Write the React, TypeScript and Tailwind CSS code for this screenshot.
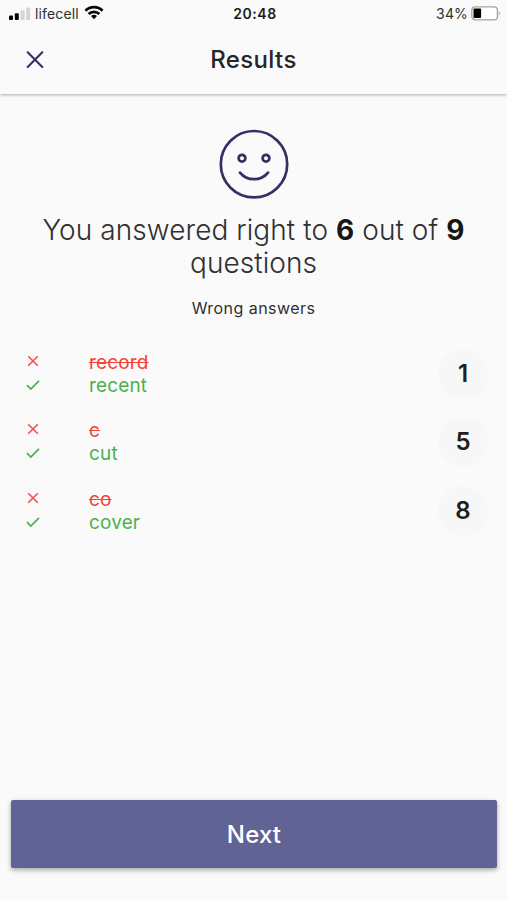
const answers = [
  {number: 1, wrong: 'record', right: 'recent'},
  {number: 5, wrong: 'c', right: 'cut'},
  {number: 8, wrong: 'co', right: 'cover'},
];

function StatusBar() {
  return (
    <div className="grid grid-cols-3 items-center h-[27px] pl-[9px] pr-[6px] text-[14px] leading-[17px] text-[#303030]">
      <div className="flex items-center">
        <svg width="22" height="14" viewBox="0 0 22 14" className="mr-[4px]">
          <rect x="0" y="8.4" width="4" height="4.5" rx="1" fill="#050505" />
          <rect x="5.8" y="6.2" width="4" height="6.7" rx="1" fill="#050505" />
          <rect x="11.6" y="3.2" width="4" height="9.7" rx="1" fill="#d4d4d4" />
          <rect x="17.2" y="0.4" width="4" height="12.5" rx="1" fill="#d4d4d4" />
        </svg>
        <span className="tracking-[0.15px]">lifecell</span>
        <svg width="20" height="15" viewBox="0 0 20 15" className="ml-[5px] mb-[2px]" fill="none" stroke="#080808" strokeWidth="2.7">
          <path d="M1.4 5.7 A12.3 12.3 0 0 1 18.6 5.7" />
          <path d="M4.6 9 A7.8 7.8 0 0 1 15.4 9" />
          <path d="M7 11.1 A4.4 4.4 0 0 1 13 11.1 L10 14.2 Z" fill="#080808" stroke="none" />
        </svg>
      </div>
      <div className="text-center font-semibold text-[#1c1c1c] tracking-[0.6px]">20:48</div>
      <div className="flex items-center justify-end">
        <span className="tracking-[0.15px]">34%</span>
        <svg width="30" height="15" viewBox="0 0 30 15" className="ml-[3px]">
          <rect x="0.8" y="0.8" width="25.6" height="13" rx="3.4" fill="#fff" stroke="#a3a3a3" strokeWidth="1.3" />
          <rect x="2.5" y="2.5" width="7.6" height="9.6" rx="1" fill="#000" />
          <path d="M27.8 5 Q30 7.3 27.8 9.6 Z" fill="#a3a3a3" />
        </svg>
      </div>
    </div>
  );
}

function Header() {
  return (
    <header className="bg-[#fafafa] h-[94px] shadow-[0_1px_3px_rgba(0,0,0,0.3)]">
      <StatusBar />
      <div className="grid grid-cols-[70px_1fr_70px] items-center h-[66px]">
        <svg width="18" height="18" viewBox="0 0 18 18" className="ml-[26px]" stroke="#352f63" strokeWidth="2.1" strokeLinecap="round">
          <path d="M1.7 1.3 L16.3 15.9 M16.3 1.3 L1.7 15.9" />
        </svg>
        <h1 className="text-center text-[24px] font-medium tracking-[0.35px] text-[#262626]">Results</h1>
      </div>
    </header>
  );
}

function Smiley() {
  return (
    <svg width="70" height="70" viewBox="0 0 70 70" fill="none" stroke="#352f63" strokeWidth="2.7" strokeLinecap="round">
      <circle cx="35" cy="35.2" r="33.2" />
      <circle cx="23" cy="29.2" r="3.4" />
      <circle cx="47" cy="29.2" r="3.4" />
      <path d="M21 43.6 C28 52.4 42 52.4 49 43.6" />
    </svg>
  );
}

function Marks() {
  return (
    <div className="w-[26px] h-[50px] flex flex-col items-center rounded-[13px] bg-[#f9f9f9]">
      <svg width="12" height="12" viewBox="0 0 12 12" className="mt-[6px]" stroke="#ef5350" strokeWidth="1.6">
        <path d="M1.2 1.2 L10.8 10.8 M10.8 1.2 L1.2 10.8" />
      </svg>
      <svg width="14" height="12" viewBox="0 0 14 12" className="mt-[12px]" fill="none" stroke="#4caf50" strokeWidth="1.7">
        <path d="M1 6.2 L4.8 10 L13 1.8" />
      </svg>
    </div>
  );
}

export default function App() {
  return (
    <div className="min-h-[900px] flex flex-col bg-[#fafafa] font-[Inter,sans-serif]">
      <Header />
      <main className="flex-1 flex flex-col items-center pt-[35px]">
        <Smiley />
        <p className="mt-[15px] text-center text-[28px] leading-[33px] font-light tracking-[0.07px] text-[#303030]">
          You answered right to <b className="font-bold text-[#161616]">6</b> out of{' '}
          <b className="font-bold text-[#161616]">9</b>
          <br />
          questions
        </p>
        <p className="mt-[18px] text-[16px] leading-[20px] tracking-[0.45px] text-[#303030]">Wrong answers</p>
        <ul className="self-stretch mt-[31px] flex flex-col gap-[18.4px] pl-[20px] pr-[19px]">
          {answers.map((answer) => (
            <li key={answer.number} className="flex items-center h-[50px]">
              <Marks />
              <div className="ml-[43px] flex-1 text-[19px] leading-[23px] tracking-[0.15px]">
                <div className="text-[#f44336] line-through">{answer.wrong}</div>
                <div className="text-[#4caf50]">{answer.right}</div>
              </div>
              <div className="size-[50px] rounded-full bg-[#f7f7f7] flex items-center justify-center text-[24px] font-semibold text-[#202020]">
                {answer.number}
              </div>
            </li>
          ))}
        </ul>
      </main>
      <div className="pl-[11px] pr-[10px] pb-[32px]">
        <button className="w-full h-[68px] pt-[2px] rounded-[2px] bg-[#616395] text-white text-[24px] font-medium tracking-[0.15px] shadow-[0_2px_5px_rgba(0,0,0,0.35)]">
          Next
        </button>
      </div>
    </div>
  );
}
